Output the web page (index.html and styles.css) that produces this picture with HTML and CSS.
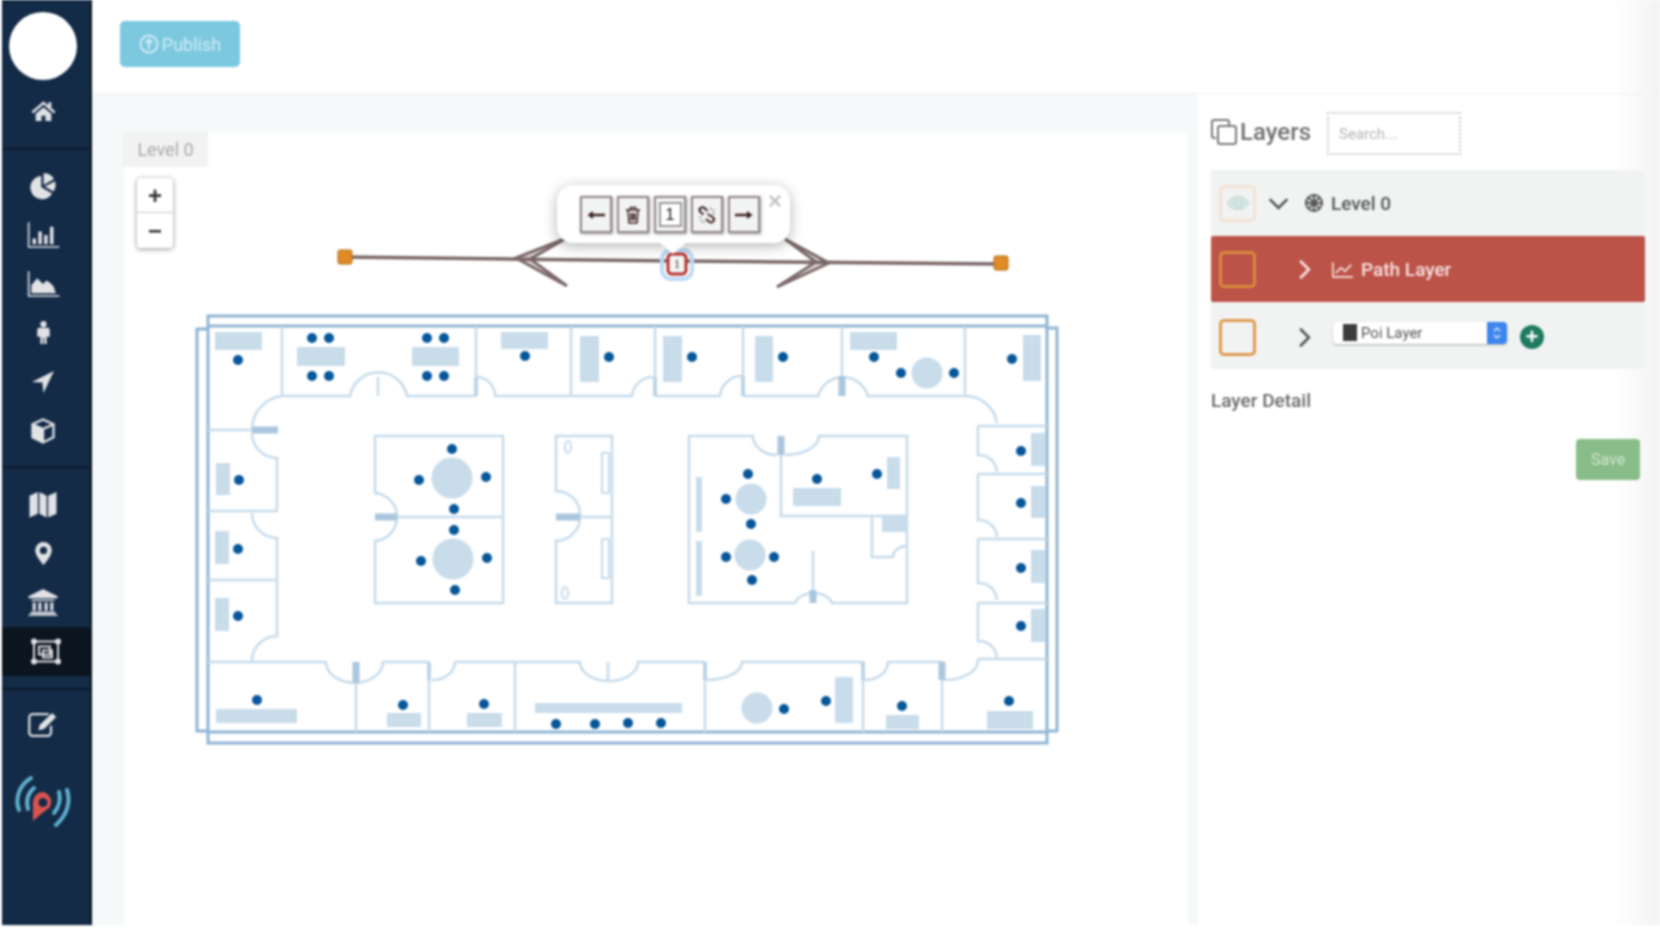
FILE: index.html
```html
<!DOCTYPE html>
<html lang="en">

<head>
  <meta charset="UTF-8">
  <title>Floor editor</title>
  <link rel="stylesheet" href="styles.css">
</head>

<body>
  <div class="app">
    <nav class="sidebar">
      <div class="avatar"></div>
      <div class="nav-group nav-first">
        <a class="nav-item"><svg class="ico" viewBox="0 0 24 24"><path d="M12 3 .5 13l1.6 1.8L12 6.2l9.9 8.6 1.6-1.8-4-3.5V4h-3v3.1z"/><path d="M4.5 15.2V22h5.6v-5h3.8v5h5.6v-6.8L12 8.8z"/></svg></a>
      </div>
      <div class="nav-group nav-stats">
        <a class="nav-item"><svg class="ico ico-pie" viewBox="0 0 24 24"><path d="M10.5 3.4a10 10 0 1 0 9.3 15L10.5 13z"/><path d="M12.5 1v10.200L21.500 6A10 10 0 0 0 12.500 1z"/><path d="M13.500 12.500 22.300 8a10 10 0 0 1-1.400 8.700z"/></svg></a>
        <a class="nav-item"><svg class="ico ico-wide" viewBox="0 0 28 24"><path d="M1 1h1.400v20.600H28V23H1z"/><path d="M5 15h3v5H5zM10 9h3v11h-3zM15 12h3v8h-3zM20 5h3v15h-3z"/></svg></a>
        <a class="nav-item"><svg class="ico ico-wide" viewBox="0 0 28 24"><path d="M1 1h1.400v20.600H28V23H1z"/><path d="M4 20V13l5-6 5 5 3-3 3 2 3 3 2 6z"/></svg></a>
        <a class="nav-item"><svg class="ico" viewBox="0 0 24 24"><circle cx="12" cy="4" r="3"/><path d="M8 7.500h8a2 2 0 0 1 2 2V16h-3v7h-2.500v-6h-1v6H9v-7H6V9.500a2 2 0 0 1 2-2z"/></svg></a>
        <a class="nav-item"><svg class="ico" viewBox="0 0 24 24"><path d="M22 2 1 12.500l10 .5 1 10z"/></svg></a>
        <a class="nav-item"><svg class="ico ico-pie" viewBox="0 0 24 24"><path d="M12 1 22 5.500v12.500L12 23 2 18V5.500zM12 3.200 5.200 6.200 12 9.300l6.800-3.100zM13 11v9.300l7-3.500V7.800z"/></svg></a>
      </div>
      <div class="nav-group nav-places">
        <a class="nav-item"><svg class="ico ico-big" viewBox="0 0 28 28"><path d="M1 5.500 9 2v21l-8 3.500zM10.500 2l7 3.500v21l-7-3.500zM19 5.500 27 2v21l-8 3.500z"/></svg></a>
        <a class="nav-item"><svg class="ico" viewBox="0 0 24 24"><path fill-rule="evenodd" d="M12 1a8 8 0 0 0-8 8c0 5 8 14 8 14s8-9 8-14a8 8 0 0 0-8-8zm0 4.500a3.500 3.500 0 1 1 0 7 3.500 3.500 0 0 1 0-7z"/></svg></a>
        <a class="nav-item"><svg class="ico ico-big" viewBox="0 0 30 28"><path d="M15 1 29 8v2H1V8zM4 11h22v1.500H4zM5 14h3v8H5zM10.500 14h3v8h-3zM16.500 14h3v8h-3zM22 14h3v8h-3zM3 23h24v2H3zM1 25.500h28V27H1z"/></svg></a>
        <a class="nav-item nav-active"><svg class="ico ico-big" viewBox="0 0 32 28"><path class="ico-line" d="M4 4h24v20H4zM9 9h11v8H9zM13 13h9v7h-9z"/><circle cx="4" cy="4" r="3"/><circle cx="28" cy="4" r="3"/><circle cx="4" cy="24" r="3"/><circle cx="28" cy="24" r="3"/></svg></a>
      </div>
      <div class="nav-group nav-last">
        <a class="nav-item"><svg class="ico ico-big" viewBox="0 0 28 24"><path class="ico-line" d="M19 3H5a3 3 0 0 0-3 3v13a3 3 0 0 0 3 3h13a3 3 0 0 0 3-3v-6"/><path d="M10 17l1-4.500L22 2l3.500 3.500L15 16z"/></svg></a>
        <a class="logo"><svg class="logo-svg" viewBox="0 0 60 54"><g class="logo-arcs"><path d="M19 3C6 11 3 25 7 35"/><path d="M22 13c-6 5-8 13-6 21"/><path d="M47 17c2 8 0 15-5 21"/><path d="M55 15c4 12 0 25-11 35"/></g><path class="logo-pin" fill-rule="evenodd" d="M31 17a10 10 0 0 0-10 10c0 4 0 19 0 19s10-9 16-13a10 10 0 0 0-6-16zm0 6a4.500 4.500 0 1 1 0 9 4.500 4.500 0 0 1 0-9z"/></svg></a>
      </div>
    </nav>

    <div class="main">
      <header class="topbar">
        <button class="btn-publish"><svg class="ico-publish" viewBox="0 0 20 20"><circle cx="10" cy="10" r="8.500"/><path d="M10 15V6M6.500 9 10 5.500 13.500 9"/></svg>Publish</button>
      </header>
      <div class="workspace">
        <section class="canvas">
          <div class="level-tab">Level 0</div>
          <div class="zoom-ctrl">
            <div class="zoom-btn">+</div>
            <div class="zoom-btn">−</div>
          </div>

          <svg class="plan" viewBox="124 132 1064 793">
            <g class="wall-outer">
              <path d="M208 316H1047V743H208zM208 326H1047M208 732H1047M208 329H197V731H208M1047 328H1057V731H1047"/>
            </g>
            <g class="furn">
              <rect x="215" y="332" width="47" height="18"/><rect x="297" y="347" width="48" height="19"/><rect x="412" y="347" width="47" height="19"/>
              <rect x="501" y="332" width="47" height="17"/><rect x="580" y="336" width="19" height="46"/><rect x="663" y="336" width="19" height="46"/>
              <rect x="755" y="336" width="18" height="46"/><rect x="850" y="332" width="47" height="18"/><rect x="1023" y="335" width="18" height="46"/>
              <rect x="216" y="463" width="14" height="32"/><rect x="215" y="531" width="14" height="33"/><rect x="215" y="598" width="14" height="33"/>
              <rect x="216" y="709" width="81" height="14"/><rect x="387" y="713" width="34" height="14"/><rect x="467" y="713" width="35" height="14"/>
              <rect x="535" y="703" width="147" height="10"/><rect x="1031" y="433" width="15" height="33"/><rect x="1031" y="486" width="15" height="32"/>
              <rect x="1031" y="550" width="15" height="33"/><rect x="1031" y="609" width="15" height="33"/><rect x="793" y="488" width="48" height="18"/>
              <rect x="887" y="457" width="13" height="32"/><rect x="835" y="677" width="18" height="46"/><rect x="886" y="715" width="33" height="14"/>
              <rect x="987" y="711" width="46" height="18"/><rect x="696" y="477" width="6" height="55"/><rect x="696" y="541" width="6" height="55"/>
              <rect x="882" y="517" width="25" height="15"/>
              <circle cx="452" cy="478" r="20.500"/><circle cx="453" cy="559" r="20.500"/><circle cx="927" cy="373" r="15.500"/>
              <circle cx="751" cy="499" r="15.500"/><circle cx="750" cy="555" r="15.500"/><circle cx="757" cy="708" r="15.500"/>
            </g>
            <g class="wall">
              <!-- top corridor wall -->
              <path d="M282 326V396M476 326V396M571 326V396M655 326V396M743 326V396M842 326V376M965 326V396"/>
              <path d="M252 430A34 34 0 0 1 282 396H350A29 29 0 0 1 407 396H476M478 377A19 19 0 0 1 495 396H571M571 396H632A21 21 0 0 1 653 377M655 396H720A22 22 0 0 1 742 376M743 396H818A26 26 0 0 1 868 396H965A32 32 0 0 1 997 423M378 377V396"/>
              <!-- left rooms -->
              <path d="M208 430H278M252 433A25 25 0 0 0 277 458V510M208 511H278M252 513A25 25 0 0 0 277 538V580M208 580H277V636A25 25 0 0 0 252 662M208 662H326"/>
              <!-- right rooms -->
              <path d="M978 426H1047M978 426V455A18 18 0 0 1 997 472M978 474H1047M978 474V520A18 18 0 0 1 997 537M978 539H1047M978 539V583A18 18 0 0 1 997 600M978 603H1047M978 603V641A18 18 0 0 1 997 659M978 659H1047"/>
              <!-- bottom corridor wall -->
              <path d="M326 662A29 21 0 0 0 355 683A29 21 0 0 0 383 662H429M356 662V732M429 662V732M432 680A23 18 0 0 0 455 662H580A29 19 0 0 0 638 662H705M515 662V732M608 662V680M705 662V732M707 680A35 18 0 0 0 742 662H863V732M865 680A23 18 0 0 0 888 662H942V732M945 680A33 20 0 0 0 978 659"/>
              <!-- middle rooms -->
              <path d="M375 436H503V603H375V541A24 24 0 0 0 397 517A24 24 0 0 0 375 493ZM397 517H503"/>
              <path d="M556 436H612V603H556V541A24 24 0 0 0 580 517A24 24 0 0 0 556 491ZM580 517H612"/>
              <path d="M777 455A24 19 0 0 1 753 436H689V603H795A19 13 0 0 1 832 603H907V436H819A34 19 0 0 1 785 455M781 436V516H907M872 516V557H893A14 11 0 0 1 907 546M813 551V603"/>
            </g>
            <g class="wall-stub">
              <path d="M476 377V396M655 377V396M743 376V396M705 662V680M863 662V680M429 662V680"/>
            </g>
            <g class="wall-thick">
              <path d="M252 430H278M375 517H397M556 517H580M842 376V396M781 436V455M356 662V683M942 662V680M813 590V603"/>
            </g>
            <g class="fixture">
              <rect x="602" y="453" width="7" height="40"/><rect x="602" y="539" width="7" height="39"/><ellipse cx="568" cy="447" rx="3" ry="6"/><ellipse cx="565" cy="593" rx="3" ry="6"/>
            </g>
            <g class="dot">
              <circle cx="238" cy="360" r="5"/><circle cx="312" cy="338" r="5"/><circle cx="329" cy="338" r="5"/><circle cx="312" cy="376" r="5"/><circle cx="329" cy="376" r="5"/>
              <circle cx="427" cy="338" r="5"/><circle cx="444" cy="338" r="5"/><circle cx="427" cy="376" r="5"/><circle cx="444" cy="376" r="5"/><circle cx="525" cy="356" r="5"/>
              <circle cx="609" cy="357" r="5"/><circle cx="239" cy="480" r="5"/><circle cx="238" cy="549" r="5"/><circle cx="238" cy="616" r="5"/><circle cx="452" cy="449" r="5"/>
              <circle cx="419" cy="480" r="5"/><circle cx="486" cy="477" r="5"/><circle cx="454" cy="509" r="5"/><circle cx="454" cy="530" r="5"/><circle cx="421" cy="561" r="5"/>
              <circle cx="487" cy="558" r="5"/><circle cx="455" cy="590" r="5"/><circle cx="257" cy="700" r="5"/><circle cx="403" cy="705" r="5"/><circle cx="484" cy="704" r="5"/>
              <circle cx="556" cy="724" r="5"/><circle cx="595" cy="724" r="5"/><circle cx="628" cy="723" r="5"/><circle cx="661" cy="723" r="5"/><circle cx="692" cy="357" r="5"/>
              <circle cx="783" cy="357" r="5"/><circle cx="874" cy="357" r="5"/><circle cx="901" cy="373" r="5"/><circle cx="954" cy="373" r="5"/><circle cx="1012" cy="359" r="5"/>
              <circle cx="1021" cy="451" r="5"/><circle cx="1021" cy="503" r="5"/><circle cx="1021" cy="568" r="5"/><circle cx="1021" cy="626" r="5"/><circle cx="748" cy="474" r="5"/>
              <circle cx="726" cy="499" r="5"/><circle cx="751" cy="524" r="5"/><circle cx="726" cy="557" r="5"/><circle cx="774" cy="557" r="5"/><circle cx="752" cy="580" r="5"/>
              <circle cx="817" cy="479" r="5"/><circle cx="877" cy="474" r="5"/><circle cx="784" cy="709" r="5"/><circle cx="826" cy="701" r="5"/><circle cx="902" cy="706" r="5"/>
              <circle cx="1009" cy="701" r="5"/>
            </g>
            <!-- path being edited -->
            <g class="route">
              <path class="route-head" d="M516 258 567 238 530 259 567 286ZM829 263 785 239 816 262 777 287Z"/>
              <path d="M345 257 677 261 1001 264"/>
            </g>
            <rect class="handle" x="338" y="250" width="14" height="14" rx="2"/>
            <rect class="handle" x="994" y="256" width="14" height="14" rx="2"/>
            <rect class="marker-halo" x="662" y="250" width="30" height="29" rx="9"/>
            <rect class="marker" x="668" y="254" width="18" height="20" rx="4"/>
            <text class="marker-text" x="677" y="268">1</text>
          </svg>

          <div class="popup">
            <button class="tool"><svg class="tool-ico" viewBox="0 0 20 20"><path d="M19 10H6"/><path class="tool-head" d="M7 6 1.500 10 7 14z"/></svg></button>
            <button class="tool"><svg class="tool-ico tool-thin" viewBox="0 0 20 20"><path d="M3 5h14M7.500 5V2.500h5V5M5 5l1 13h8l1-13M8 8v7.500M10 8v7.500M12 8v7.500"/></svg></button>
            <button class="tool"><span class="tool-num">1</span></button>
            <button class="tool"><svg class="tool-ico tool-chain" viewBox="0 0 20 20"><path d="M6.500 9.500 3.500 7a2.800 2.800 0 0 1 4-4l3 3"/><path d="M10.500 9l5 3a2.800 2.800 0 0 1-3 5l-3.500-3"/><path class="tool-spark" d="M13.500 2.500l.5 2.500M17.500 4.500l-2.500 1.500M18 8.500h-3M2 12.500l2.500-.5M3 16.500l2.500-1.500M6.500 18.500l.5-2.500"/></svg></button>
            <button class="tool"><svg class="tool-ico" viewBox="0 0 20 20"><path d="M1 10h13"/><path class="tool-head" d="M13 6l5.500 4-5.500 4z"/></svg></button>
            <span class="popup-close">×</span>
          </div>
        </section>

        <aside class="panel">
          <div class="panel-head">
            <svg class="ico-layers" viewBox="0 0 26 26"><path d="M5 19H3a2 2 0 0 1-2-2V3a2 2 0 0 1 2-2h13a2 2 0 0 1 2 2v3"/><rect x="7" y="7" width="18" height="18" rx="2"/></svg>
            <span class="panel-title">Layers</span>
            <input class="search" type="text" placeholder="Search...">
          </div>

          <div class="layer-list">
            <div class="layer-row">
              <span class="check check-faint"><svg class="ico-eye" viewBox="0 0 24 24"><path d="M1 12c5-9 17-9 22 0-5 9-17 9-22 0z"/><circle cx="12" cy="12" r="4"/></svg></span>
              <svg class="chev chev-down" viewBox="0 0 24 14"><path d="M2 2l10 10L22 2"/></svg>
              <svg class="ico-level" viewBox="0 0 20 20"><circle cx="10" cy="10" r="8"/><path d="M10 1v18M1 10h18M5 5l10 10M15 5 5 15"/></svg>
              <span class="layer-name">Level 0</span>
            </div>
            <div class="layer-row layer-active">
              <span class="check"></span>
              <svg class="chev chev-right" viewBox="0 0 14 24"><path d="M2 2l10 10L2 22"/></svg>
              <svg class="ico-line-chart" viewBox="0 0 24 18"><path d="M1 1v16h22"/><path d="M4 13l6-6 4 4 7-7"/></svg>
              <span class="layer-name">Path Layer</span>
            </div>
            <div class="layer-row layer-poi">
              <span class="check"></span>
              <svg class="chev chev-right" viewBox="0 0 14 24"><path d="M2 2l10 10L2 22"/></svg>
              <div class="layer-select">
                <i class="swatch"></i>
                <span class="select-text">Poi Layer</span>
                <span class="select-arrows"><svg class="select-ico" viewBox="0 0 10 16"><path d="M2 6l3-3 3 3M2 10l3 3 3-3"/></svg></span>
              </div>
              <span class="add-btn">+</span>
            </div>
          </div>

          <div class="detail-title">Layer Detail</div>
          <div class="panel-actions">
            <button class="btn-save">Save</button>
          </div>
        </aside>
      </div>
    </div>
  </div>
</body>

</html>
```
FILE: styles.css
```css
* {
  box-sizing: border-box;
}

html, body {
  margin: 0;
  height: 100%;
  overflow: hidden;
  background: #fff;
}

body {
  font-family: Roboto, "Liberation Sans", sans-serif;
  color: #666;
}

.app {
  display: flex;
  height: 925px;
  filter: blur(1px);
}

/* sidebar */
.sidebar {
  width: 90px;
  margin-left: 2px;
  flex-shrink: 0;
  background: #142b47;
  border-right: 2px solid #0a1420;
  box-shadow: 2px 0 2px rgba(0, 0, 0, 0.25);
  display: flex;
  flex-direction: column;
}

.avatar {
  width: 68px;
  height: 68px;
  margin: 12px 0 0 7px;
  border-radius: 50%;
  background: #fff;
  flex-shrink: 0;
}

.nav-group {
  border-bottom: 2px solid #0b1a2b;
}

.nav-first {
  padding: 6px 0 13px;
}

.nav-stats {
  padding: 11px 0;
}

.nav-places {
  padding: 12px 0;
}

.nav-last {
  border-bottom: 0;
  padding-top: 10px;
}

.nav-item {
  display: flex;
  align-items: center;
  justify-content: center;
  height: 49px;
  padding-right: 6px;
}

.nav-active {
  background: #0a1520;
  padding-right: 0;
}

.ico {
  width: 25px;
  height: 25px;
  fill: #e0e2e5;
}

.ico-pie {
  width: 28px;
  height: 28px;
}

.ico-wide {
  width: 34px;
  height: 28px;
}

.ico-big {
  width: 32px;
  height: 29px;
}

.ico-line {
  fill: none;
  stroke: #d8dadd;
  stroke-width: 2;
}

.logo {
  display: block;
  margin-top: 26px;
  padding-left: 10px;
}

.logo-svg {
  display: block;
  width: 60px;
  height: 54px;
}

.logo-arcs path {
  fill: none;
  stroke: #5fb0cf;
  stroke-width: 4;
  stroke-linecap: round;
}

.logo-pin {
  fill: #d9534f;
}

/* main */
.main {
  flex: 1;
  min-width: 0;
  display: flex;
  flex-direction: column;
}

.topbar {
  height: 93px;
  flex-shrink: 0;
  padding: 21px 0 0 28px;
  background: linear-gradient(to right, #fff 97%, #f3f3f3);
}

.btn-publish {
  width: 120px;
  height: 46px;
  border: 0;
  border-radius: 5px;
  background: #7bc8df;
  color: #d0ecf4;
  font: 18px Roboto, sans-serif;
  display: flex;
  align-items: center;
  justify-content: center;
  gap: 3px;
}

.ico-publish {
  width: 20px;
  height: 20px;
  fill: none;
  stroke: #d0ecf4;
  stroke-width: 2;
}

.workspace {
  flex: 1;
  display: flex;
  min-height: 0;
  background: #f6f9fa;
  border-top: 1px solid #f0f2f3;
}

/* map canvas */
.canvas {
  position: relative;
  width: 1064px;
  margin: 38px 0 0 32px;
  background: #fff;
}

.level-tab {
  width: 85px;
  height: 35px;
  margin-left: -1px;
  background: #f2f2f2;
  color: #aaa;
  font-size: 18px;
  line-height: 35px;
  text-align: center;
}

.zoom-ctrl {
  position: absolute;
  left: 13px;
  top: 46px;
  width: 36px;
  background: #fff;
  border-radius: 4px;
  box-shadow: 0 1px 5px rgba(0, 0, 0, 0.45);
  z-index: 3;
}

.zoom-btn {
  height: 35px;
  font: bold 24px/36px "Liberation Sans", sans-serif;
  text-align: center;
  color: #333;
}

.zoom-btn:first-child {
  border-bottom: 1px solid #ccc;
}

.plan {
  position: absolute;
  left: 0;
  top: 0;
  width: 1064px;
  height: 793px;
}

.wall-outer path {
  fill: none;
  stroke: #8fb5d5;
  stroke-width: 3;
}

.wall path {
  fill: none;
  stroke: #c6dbeb;
  stroke-width: 2.5;
}

.wall-stub path {
  fill: none;
  stroke: #bcd3e6;
  stroke-width: 4;
}

.wall-thick path {
  fill: none;
  stroke: #a9c6de;
  stroke-width: 7;
}

.fixture rect, .fixture ellipse {
  fill: #fff;
  stroke: #c6dbeb;
  stroke-width: 2;
}

.furn {
  fill: #c8dcea;
}

.dot {
  fill: #05569a;
}

.route path {
  fill: none;
  stroke: #7b6767;
  stroke-width: 3.5;
}

.route .route-head {
  fill: #dcd7d7;
  stroke-width: 3;
  stroke-linejoin: miter;
}

.handle {
  fill: #e08b25;
  stroke: #b06a15;
  stroke-width: 1;
}

.marker-halo {
  fill: none;
  stroke: #bcdaf5;
  stroke-width: 4;
}

.marker {
  fill: #f5f5f5;
  stroke: #b5302c;
  stroke-width: 3;
}

.marker-text {
  font: 12px "Liberation Serif", serif;
  fill: #333;
  text-anchor: middle;
}

/* popup over the path */
.popup {
  position: absolute;
  left: 433px;
  top: 53px;
  width: 233px;
  height: 58px;
  padding: 11px 0 0 23px;
  background: #fff;
  border-radius: 16px;
  box-shadow: 0 3px 14px rgba(0, 0, 0, 0.3);
  display: flex;
  align-items: flex-start;
  gap: 5px;
  z-index: 2;
}

.popup::after {
  content: "";
  position: absolute;
  left: 102px;
  bottom: -11px;
  border-left: 14px solid transparent;
  border-right: 14px solid transparent;
  border-top: 12px solid #fff;
}

.tool {
  width: 32px;
  height: 37px;
  padding: 0;
  border: 2px solid #938585;
  background: #f2f3f3;
  box-shadow: 1px 1px 3px rgba(0, 0, 0, 0.4);
  display: flex;
  align-items: center;
  justify-content: center;
}

.tool-ico {
  width: 20px;
  height: 20px;
  fill: none;
  stroke: #3a1f1f;
  stroke-width: 2.5;
}

.tool-head {
  fill: #3a1f1f;
  stroke: none;
}

.tool-thin {
  stroke-width: 1.5;
}

.tool-chain {
  stroke-width: 2;
}

.tool-spark {
  stroke: #777;
  stroke-width: 1;
}

.tool-num {
  width: 23px;
  height: 25px;
  background: #fff;
  border: 2px solid #999;
  color: #222;
  font-size: 17px;
  font-weight: 500;
  line-height: 21px;
  text-align: center;
}

.popup-close {
  position: absolute;
  right: 8px;
  top: 4px;
  color: #c4c4c4;
  font: bold 24px/24px "Liberation Sans", sans-serif;
}

/* layers panel */
.panel {
  width: 462px;
  margin-left: 10px;
  padding: 0 15px 0 13px;
  background: linear-gradient(to right, #fff 90%, #f3f3f3);
}

.panel-head {
  display: flex;
  align-items: center;
  height: 76px;
  padding-bottom: 1px;
}

.ico-layers {
  width: 26px;
  height: 26px;
  fill: #fff;
  stroke: #777;
  stroke-width: 2;
}

.panel-title {
  margin-left: 3px;
  font-size: 24px;
  font-weight: 500;
  color: #707070;
}

.search {
  width: 134px;
  height: 43px;
  margin: 4px 0 0 16px;
  padding: 0 10px;
  border: 2px dotted #c4c4c4;
  font: 15px Roboto, sans-serif;
  outline: 0;
}

.search::placeholder {
  color: #b4b4b4;
}

.layer-list {
  width: 434px;
  background: #f1f3f3;
}

.layer-row {
  height: 66px;
  padding-left: 8px;
  display: flex;
  align-items: center;
  color: #555;
}

.layer-active {
  background: #bb5349;
  border-radius: 2px;
  color: #f8e3e0;
}

.layer-poi {
  height: 67px;
  padding-top: 3px;
}

.check {
  width: 37px;
  height: 37px;
  border: 3px solid #e09a4e;
  border-radius: 5px;
  flex-shrink: 0;
  display: flex;
  align-items: center;
  justify-content: center;
}

.layer-active .check {
  border-color: #d98a3c;
}

.check-faint {
  border-color: #f3e2d2;
}

.ico-eye {
  width: 24px;
  height: 24px;
  fill: #d3e4e1;
  stroke: #c3d9d6;
}

.chev {
  fill: none;
  stroke: #555;
  stroke-width: 3;
  flex-shrink: 0;
}

.chev-down {
  width: 21px;
  height: 13px;
  margin-left: 12px;
}

.chev-right {
  width: 13px;
  height: 21px;
  margin-left: 42px;
}

.layer-active .chev-right {
  stroke: #f8e3e0;
}

.ico-level {
  width: 20px;
  height: 20px;
  margin-left: 15px;
  fill: none;
  stroke: #555;
  stroke-width: 2;
}

.ico-line-chart {
  width: 22px;
  height: 17px;
  margin: 0 7px 0 21px;
  fill: none;
  stroke: #f8e3e0;
  stroke-width: 1.8;
}

.layer-name {
  margin-left: 7px;
  font-size: 19px;
  font-weight: 500;
}

.layer-active .layer-name {
  margin-left: 0;
}

.layer-select {
  width: 174px;
  height: 22px;
  margin: 0 0 9px 22px;
  padding-left: 10px;
  background: #fff;
  border-radius: 4px;
  box-shadow: 0 1px 2px rgba(0, 0, 0, 0.3);
  display: flex;
  align-items: center;
}

.swatch {
  width: 14px;
  height: 17px;
  background: #3c3c3c;
}

.select-text {
  margin-left: 4px;
  flex: 1;
  font-size: 15px;
  color: #555;
}

.select-arrows {
  width: 20px;
  height: 22px;
  background: #3b86ee;
  border-radius: 0 4px 4px 0;
  display: flex;
  align-items: center;
  justify-content: center;
}

.select-ico {
  width: 10px;
  height: 16px;
  fill: none;
  stroke: #dfeafc;
  stroke-width: 1.5;
}

.add-btn {
  width: 24px;
  height: 24px;
  margin-left: 13px;
  border-radius: 50%;
  background: #1f7a5f;
  color: #fff;
  font: bold 22px/23px "Liberation Sans", sans-serif;
  text-align: center;
}

.detail-title {
  margin-top: 21px;
  font-size: 19px;
  font-weight: 500;
  line-height: 22px;
  color: #6a6a6a;
}

.panel-actions {
  margin-top: 27px;
  padding-right: 5px;
  display: flex;
  justify-content: flex-end;
}

.btn-save {
  width: 64px;
  height: 41px;
  border: 0;
  border-radius: 4px;
  background: #88bc88;
  color: #d2e6d2;
  font: 16px Roboto, sans-serif;
}
```
